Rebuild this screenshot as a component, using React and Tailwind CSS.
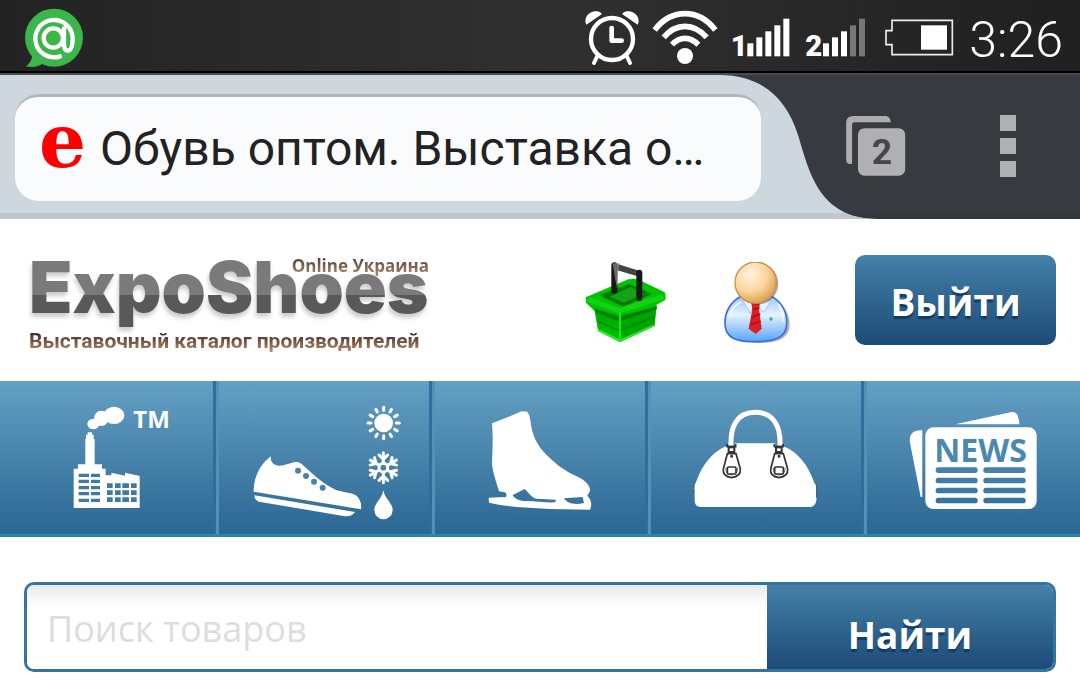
import React, { useState } from 'react';

const ChatIcon = () => (
  <svg viewBox="75 0 180 213" className="w-15 h-[71px]" aria-hidden="true">
    <circle cx="162" cy="113" r="87" fill="#3cb54a" />
    <path d="M100 150Q98 185 78 199Q108 206 130 190Z" fill="#3cb54a" />
    <g fill="none" stroke="#fff" strokeWidth="13" strokeLinecap="round">
      <circle cx="160" cy="114" r="29" />
      <path d="M192 85V132Q192 153 204 152Q218 150 218 113A56 56 0 1 0 180 169" />
    </g>
  </svg>
);

const AlarmIcon = () => (
  <svg viewBox="30 0 195 213" className="w-[65px] h-[71px]" aria-hidden="true">
    <g fill="none" stroke="#fff">
      <circle cx="126" cy="117" r="63" strokeWidth="13" />
      <path d="M82 168L72 189M170 168L180 189" strokeWidth="12" strokeLinecap="round" />
      <path d="M125 84V122H155" strokeWidth="14" strokeLinecap="round" strokeLinejoin="round" />
    </g>
    <path d="M49 74C38 52 60 30 82 34Q92 36 96 42Z" fill="#fff" />
    <path d="M203 74C214 52 192 30 170 34Q160 36 156 42Z" fill="#fff" />
  </svg>
);

const WifiIcon = () => (
  <svg viewBox="225 0 243 213" className="w-[81px] h-[71px]" aria-hidden="true">
    <g fill="none" stroke="#fff" strokeWidth="17">
      <path d="M254 90Q292 41 345 41T436 90" />
      <path d="M281 112Q309 79 345 79T410 112" />
      <path d="M306 134Q324 115 345 115T385 134" />
    </g>
    <circle cx="345" cy="168" r="24" fill="#fff" />
  </svg>
);

const SignalIcon = ({ sim, viewBox, className, start, digitX, level }) => (
  <svg viewBox={viewBox} className={className} aria-hidden="true">
    <text x={digitX} y="168" fontSize="88" fontWeight="900" fill="#fff" className="font-['Roboto',sans-serif]">{sim}</text>
    {[130, 112, 94, 76, 56].map((top, i) => (
      <rect key={top} x={start + i * 27} y={top} width="18" height={169 - top} fill={i < level ? '#fff' : '#777'} />
    ))}
  </svg>
);

const BatteryIcon = () => (
  <svg viewBox="915 0 264 213" className="w-[88px] h-[71px]" aria-hidden="true">
    <path d="M966 61H1147V164H966V134H948V92H966Z" fill="none" stroke="#eee" strokeWidth="5" />
    <rect x="1053" y="76" width="78" height="73" fill="#fff" />
  </svg>
);

const BasketIcon = () => (
  <svg viewBox="45 62 243 243" className="w-[81px] h-[81px]" aria-hidden="true">
    <defs>
      <linearGradient id="basketSide" x1="0" y1="0" x2="0" y2="1">
        <stop offset="0" stopColor="#009c00" />
        <stop offset="1" stopColor="#00c900" />
      </linearGradient>
    </defs>
    <path d="M47 168L175 114L200 112L283 152Q289 158 286 176L260 190L254 254L150 303L84 268L74 210L48 184Z" fill="#00c400" />
    <path d="M86 162L178 128L246 158L160 196Z" fill="#007d00" />
    <path d="M120 166L182 136L222 158L162 184Z" fill="#14a018" />
    <path d="M74 200L148 222V299L86 266Z" fill="url(#basketSide)" />
    <path d="M260 194L152 222V299L252 252Z" fill="#00a600" />
    <path d="M75 204L148 228L260 196V204L148 240L77 212Z" fill="#007a00" />
    <path d="M84 240L148 268L254 226" fill="none" stroke="#00850a" strokeWidth="4" />
    <path d="M54 174L148 208L280 166" fill="none" stroke="#12d212" strokeWidth="16" strokeLinejoin="round" />
    <path d="M84 266L150 298L252 252" fill="none" stroke="#28ea28" strokeWidth="6" />
    <path d="M150 215V295" stroke="#1fe01f" strokeWidth="7" />
    <path d="M137 76L210 98" fill="none" stroke="#444" strokeWidth="18" />
    <path d="M133 72V148M208 94V170" fill="none" stroke="#181818" strokeWidth="18" strokeLinecap="round" />
    <path d="M128 66H150L146 80L140 140Z" fill="#8b8b8b" opacity=".7" />
  </svg>
);

const UserIcon = () => (
  <svg viewBox="462 62 219 243" className="w-[73px] h-[81px]" aria-hidden="true">
    <defs>
      <radialGradient id="face" cx=".36" cy=".3" r=".75">
        <stop offset="0" stopColor="#fff3e0" />
        <stop offset=".55" stopColor="#fcd69c" />
        <stop offset="1" stopColor="#d99a4c" />
      </radialGradient>
      <linearGradient id="shirt" x1="0" y1="0" x2="0" y2="1">
        <stop offset="0" stopColor="#9cc8ff" />
        <stop offset=".4" stopColor="#e4f2ff" />
        <stop offset="1" stopColor="#58a4fb" />
      </linearGradient>
    </defs>
    <path d="M520 170C485 185 466 220 468 252C470 292 500 305 562 305S658 292 659 250C660 215 638 180 600 170Z" fill="#222" opacity=".35" />
    <path d="M510 166C478 184 463 218 465 250C467 290 498 301 556 301S649 290 650 248C651 213 636 182 606 166Z" fill="url(#shirt)" stroke="#3a6fe0" strokeWidth="5" />
    <path d="M480 226C485 204 498 188 514 182M624 188Q640 210 641 240" fill="none" stroke="#fff" strokeWidth="6" opacity=".8" />
    <path d="M520 180L540 216L556 188L582 214L600 182" fill="#e7f3ff" stroke="#a3c9f4" strokeWidth="3" />
    <path d="M544 184H570L567 204L575 262L557 278L536 262L547 204Z" fill="#dc1f24" />
    <path d="M547 204L568 200M544 228L571 218M540 250L573 240" stroke="#9f1118" strokeWidth="4" />
    <circle cx="603" cy="233" r="5" fill="#35b58a" />
    <circle cx="562" cy="127" r="63" fill="#333" opacity=".4" />
    <circle cx="557" cy="124" r="62" fill="url(#face)" stroke="#cf8e44" strokeWidth="4" />
  </svg>
);

const FactoryIcon = () => (
  <svg viewBox="0 18 639 459" className="w-full h-[153px]" aria-hidden="true">
    <g fill="#fff">
      <ellipse cx="342" cy="121" rx="31" ry="26" />
      <ellipse cx="304" cy="130" rx="22" ry="23" />
      <ellipse cx="280" cy="147" rx="18" ry="16" />
      <path d="M256 268V192H258V179H263V172H276V179H281V192H284V268H306V281H317V301H334V293L375 302V293L419 303V399H221V281H234V268Z" />
      <text x="400" y="158" fontSize="72" fontWeight="700" className="font-['Open_Sans',sans-serif]">TM</text>
    </g>
    <g fill="#3d7ba5">
      {[296, 314, 333, 351, 371].map((y) => (
        <path key={y} d={`M236 ${y}h31v10h-31zM273 ${y}h27v10h-27z`} />
      ))}
      {[325, 346, 367].map((y) => (
        <path key={y} d={`M321 ${y}h17v14h-17zM345 ${y}h17v14h-17zM367 ${y}h20v14h-20zM393 ${y}h17v14h-17z`} />
      ))}
    </g>
  </svg>
);

const ShoeIcon = () => (
  <svg viewBox="12 18 630 459" className="w-full h-[153px]" aria-hidden="true">
    <g fill="#fff">
      <path d="M168 244C165 258 174 271 190 272C210 273 228 262 242 261C252 260 260 266 270 276C300 304 330 330 362 344C385 352 408 352 422 360C436 372 441 388 438 403L116 350C115 310 134 268 168 244Z" />
      <path d="M118 361L420 411C414 421 400 426 385 423L132 380C122 376 118 369 118 361Z" />
      <circle cx="506" cy="144" r="28" />
      <path d="M505 346C509 372 533 385 533 405A27.500 27.500 0 0 1 478 405C478 385 501 372 505 346Z" />
    </g>
    <g fill="#4784ac">
      <circle cx="249" cy="287" r="9" />
      <circle cx="273" cy="303" r="9" />
      <circle cx="297" cy="320" r="9" />
      <circle cx="323" cy="338" r="9" />
    </g>
    <g stroke="#fff" strokeWidth="9" strokeLinecap="round">
      {[0, 30, 60, 90, 120, 150, 180, 210, 240, 270, 300, 330].map((a) => (
        <path key={a} d="M506 106V97" transform={`rotate(${a} 506 144)`} />
      ))}
    </g>
    <g stroke="#fff" strokeWidth="9" fill="none" strokeLinecap="round">
      {[0, 60, 120, 180, 240, 300].map((a) => (
        <path key={a} d="M505 264V233M492 240L505 253L518 240" transform={`rotate(${a} 505 278)`} />
      ))}
      <circle cx="505" cy="278" r="13" />
    </g>
  </svg>
);

const SkateIcon = () => (
  <svg viewBox="15 18 630 459" className="w-full h-[153px]" aria-hidden="true">
    <path
      fill="#fff"
      fillRule="evenodd"
      d="M186 145L240 124L275 109L292 110C300 120 301 135 303 150C308 185 325 215 350 240C385 275 410 290 440 304C465 315 480 332 480 345C479 352 474 358 472 362C482 372 488 385 480 404L360 402L260 396C230 393 200 388 177 383L176 368L228 366C231 360 229 355 225 352L207 349C200 325 187 290 186 265C187 225 190 190 186 145Z
        M248 360L284 342C295 352 303 366 318 371L378 374L375 382C350 384 320 378 290 378C265 378 252 370 248 360Z
        M402 370L458 366L462 384C440 390 412 388 402 370Z"
    />
  </svg>
);

const BagTag = ({ x }) => (
  <g transform={`translate(${x} 0)`} fill="none" stroke="#333" strokeWidth="5">
    <path d="M246 207V215H272V207" />
    <rect x="251" y="217" width="17" height="14" fill="#fff" strokeWidth="6" />
    <path d="M247 236H273L286 282Q288 304 260 308Q232 304 235 282Z" fill="#fff" />
    <path d="M243 278Q240 298 260 300Q280 298 278 278" strokeWidth="2" />
    <rect x="247" y="276" width="26" height="21" rx="4" fill="#fff" />
    <circle cx="260" cy="244" r="2" />
  </g>
);

const BagIcon = () => (
  <svg viewBox="18 18 630 459" className="w-full h-[153px]" aria-hidden="true">
    <path d="M258 212C256 160 272 112 331 112S407 160 405 212" fill="none" stroke="#fff" strokeWidth="15" />
    <path d="M270 205H390L392 216L420 216C458 232 490 270 508 324L516 335V358L513 382Q508 394 497 396H165Q152 394 149 380V355L145 340L156 314C172 268 205 230 243 214L270 215Z" fill="#fff" />
    <path d="M147 332V352M515 330V368" stroke="#444" strokeWidth="3" />
    <BagTag x={0} />
    <BagTag x={142} />
  </svg>
);

const NewsIcon = () => (
  <svg viewBox="21 18 639 459" className="w-full h-[153px]" aria-hidden="true">
    <g fill="#fff">
      <path d="M285 148L455 111Q476 108 478 148Z" />
      <path d="M187 166Q148 164 149 198L182 366H187Z" />
      <rect x="196" y="157" width="334" height="245" rx="24" />
    </g>
    <text x="223" y="260" fontSize="96" fontWeight="700" fill="#4a88b0" className="font-['Open_Sans',sans-serif]">NEWS</text>
    {[
      { y: 277, fill: '#4582ab' },
      { y: 308, fill: '#407ea8' },
      { y: 338, fill: '#3b79a4' },
      { y: 368, fill: '#3673a0' },
    ].map((line) => (
      <g key={line.y} fill={line.fill}>
        <rect x="227" y={line.y} width="126" height="17" rx="8" />
        <rect x="370" y={line.y} width="127" height="17" rx="8" />
      </g>
    ))}
  </svg>
);

const categories = [
  { id: 'brands', label: 'Производители', Icon: FactoryIcon },
  { id: 'shoes', label: 'Обувь', Icon: ShoeIcon },
  { id: 'skates', label: 'Коньки', Icon: SkateIcon },
  { id: 'bags', label: 'Сумки', Icon: BagIcon },
  { id: 'news', label: 'Новости', Icon: NewsIcon },
];

const StatusBar = () => (
  <div className="flex items-center justify-between pl-[25px] pr-[17px] bg-linear-to-r from-[#232323] via-[#303030] to-[#202020] border-b-2 border-black">
    <ChatIcon />
    <div className="flex items-center">
      <AlarmIcon />
      <WifiIcon />
      <SignalIcon sim="1" viewBox="468 0 216 213" className="w-[72px] h-[71px]" start={532} digitX={482} level={5} />
      <SignalIcon sim="2" viewBox="684 0 231 213" className="w-[77px] h-[71px]" start={759} digitX={706} level={3} />
      <BatteryIcon />
      <time className="pl-1.5 pt-2 text-[50px] leading-[60px] font-light text-white">3:26</time>
    </div>
  </div>
);

const BrowserBar = () => (
  <div className="flex bg-[#373b3f] border-t-2 border-[#4a4a4a]">
    <div className="flex-1 min-w-0 bg-[#ced6de] border-b-6 border-[#bfc6ce] pt-[19px] pb-3 pl-[15px]">
      <div className="relative z-10 -mr-[41px] flex items-center h-[107px] rounded-3xl bg-[#fafbfd] border-t-3 border-[#b0b7bf] pl-6">
        <span className="w-[45px] shrink-0 text-[74px] leading-[80px] pb-4 font-bold text-[#f00] font-['DejaVu_Serif',serif]">e</span>
        <span className="pl-4 text-5xl leading-[64px] text-[#222] whitespace-nowrap">Обувь оптом. Выставка о…</span>
      </div>
    </div>
    <svg viewBox="0 0 160 144" className="relative w-40 h-36 -mr-10 shrink-0 pointer-events-none" aria-hidden="true">
      <path d="M0 138H160V144H0Z" fill="#33373c" />
      <path d="M0 0C40 0 66 22 78 60C89 95 98 144 158 144H0Z" fill="#ced6de" />
      <path d="M0 138H124Q138 144 158 144H0Z" fill="#bfc6ce" />
    </svg>
    <div className="w-60 flex items-center justify-between pl-1.5 pr-16 pt-1 border-b-6 border-[#33373c]">
      <button aria-label="Вкладки">
        <svg viewBox="318 135 182 183" className="w-15 h-15">
          <path d="M336 281Q318 285 318 268V156Q318 135 340 135H440Q453 137 454 154H344Q336 154 336 164Z" fill="#adadaf" />
          <rect x="354" y="172" width="144" height="145" rx="20" fill="#b0b0b2" />
          <text x="427" y="282" textAnchor="middle" fontSize="108" fontWeight="700" fill="#42474d" className="font-['Roboto',sans-serif]">2</text>
        </svg>
      </button>
      <button aria-label="Меню" className="flex flex-col gap-[7px]">
        <span className="w-4 h-4 bg-[#b0b0b2]"></span>
        <span className="w-4 h-4 bg-[#b0b0b2]"></span>
        <span className="w-4 h-4 bg-[#b0b0b2]"></span>
      </button>
    </div>
  </div>
);

const Logo = () => (
  <a href="#home" className="relative block w-[400px]">
    <span className="block pb-3 text-[71px] leading-[64px] font-black text-transparent bg-clip-text bg-linear-to-b from-[#7a7a7a] from-53% to-[#595959] to-53% drop-shadow-[-1px_4px_2px_rgba(0,0,0,0.2)] font-['Inter',sans-serif]">
      ExpoShoes
    </span>
    <span className="absolute right-0 top-px text-[17px] leading-5 font-bold text-transparent bg-clip-text bg-linear-to-b from-[#4a3a34] to-[#b58a6c] font-['Open_Sans',sans-serif]">
      Online Украина
    </span>
    <span className="inline-block pb-1 text-[21px] leading-5 font-bold whitespace-nowrap text-transparent bg-clip-text bg-linear-to-b from-[#4a332c] from-15% to-[#b98a6a] to-85%">
      Выставочный каталог производителей
    </span>
  </a>
);

const App = () => {
  const [query, setQuery] = useState('');

  return (
    <div className="min-h-screen bg-white font-['Roboto',sans-serif]">
      <StatusBar />
      <BrowserBar />

      <header className="flex items-start justify-between pl-[29px] pr-6 py-9">
        <div className="h-[90px]"><Logo /></div>
        <div className="flex items-center gap-[58px]">
          <a href="#cart" aria-label="Корзина" className="pt-1"><BasketIcon /></a>
          <a href="#profile" aria-label="Профиль" className="pt-1"><UserIcon /></a>
          <button className="w-[201px] h-[90px] pt-1 rounded-[10px] bg-linear-to-b from-[#4481a8] to-[#1d4b78] text-white text-[37px] font-bold text-shadow-[0_3px_1px_rgba(10,45,85,0.7)] font-['Open_Sans',sans-serif]">
            Выйти
          </button>
        </div>
      </header>

      {/* Category navigation */}
      <nav className="grid grid-cols-5 bg-linear-to-b from-[#64a0c3] to-[#2b6794] border-b-3 border-[#2c85ae]">
        {categories.map(({ id, label, Icon }) => (
          <a
            key={id}
            href={`#${id}`}
            aria-label={label}
            className="border-l-3 border-l-[#5391b7] border-r-3 border-r-[#2f6f9c] first:border-l-0 last:border-r-0"
          >
            <Icon />
          </a>
        ))}
      </nav>

      {/* Search */}
      <form className="mx-6 mt-[45px] flex h-[90px] border-3 border-[#3474a1] rounded-[10px] overflow-hidden" onSubmit={(e) => e.preventDefault()}>
        <input
          type="text"
          aria-label="Поиск товаров"
          placeholder="Поиск товаров"
          className="flex-1 min-w-0 pl-5 pt-1 outline-none text-[36px] text-[#333] placeholder:text-[#ddd] bg-linear-to-b from-[#e9e9e9] to-white to-25% font-['Open_Sans',sans-serif]"
          value={query}
          onChange={(e) => setQuery(e.target.value)}
        />
        <button className="w-[286px] pt-4 bg-linear-to-b from-[#4481a8] to-[#1d4b78] text-white text-[37px] font-bold text-shadow-[0_3px_1px_rgba(10,45,85,0.7)] font-['Open_Sans',sans-serif]">
          Найти
        </button>
      </form>
    </div>
  );
};

export default App;
